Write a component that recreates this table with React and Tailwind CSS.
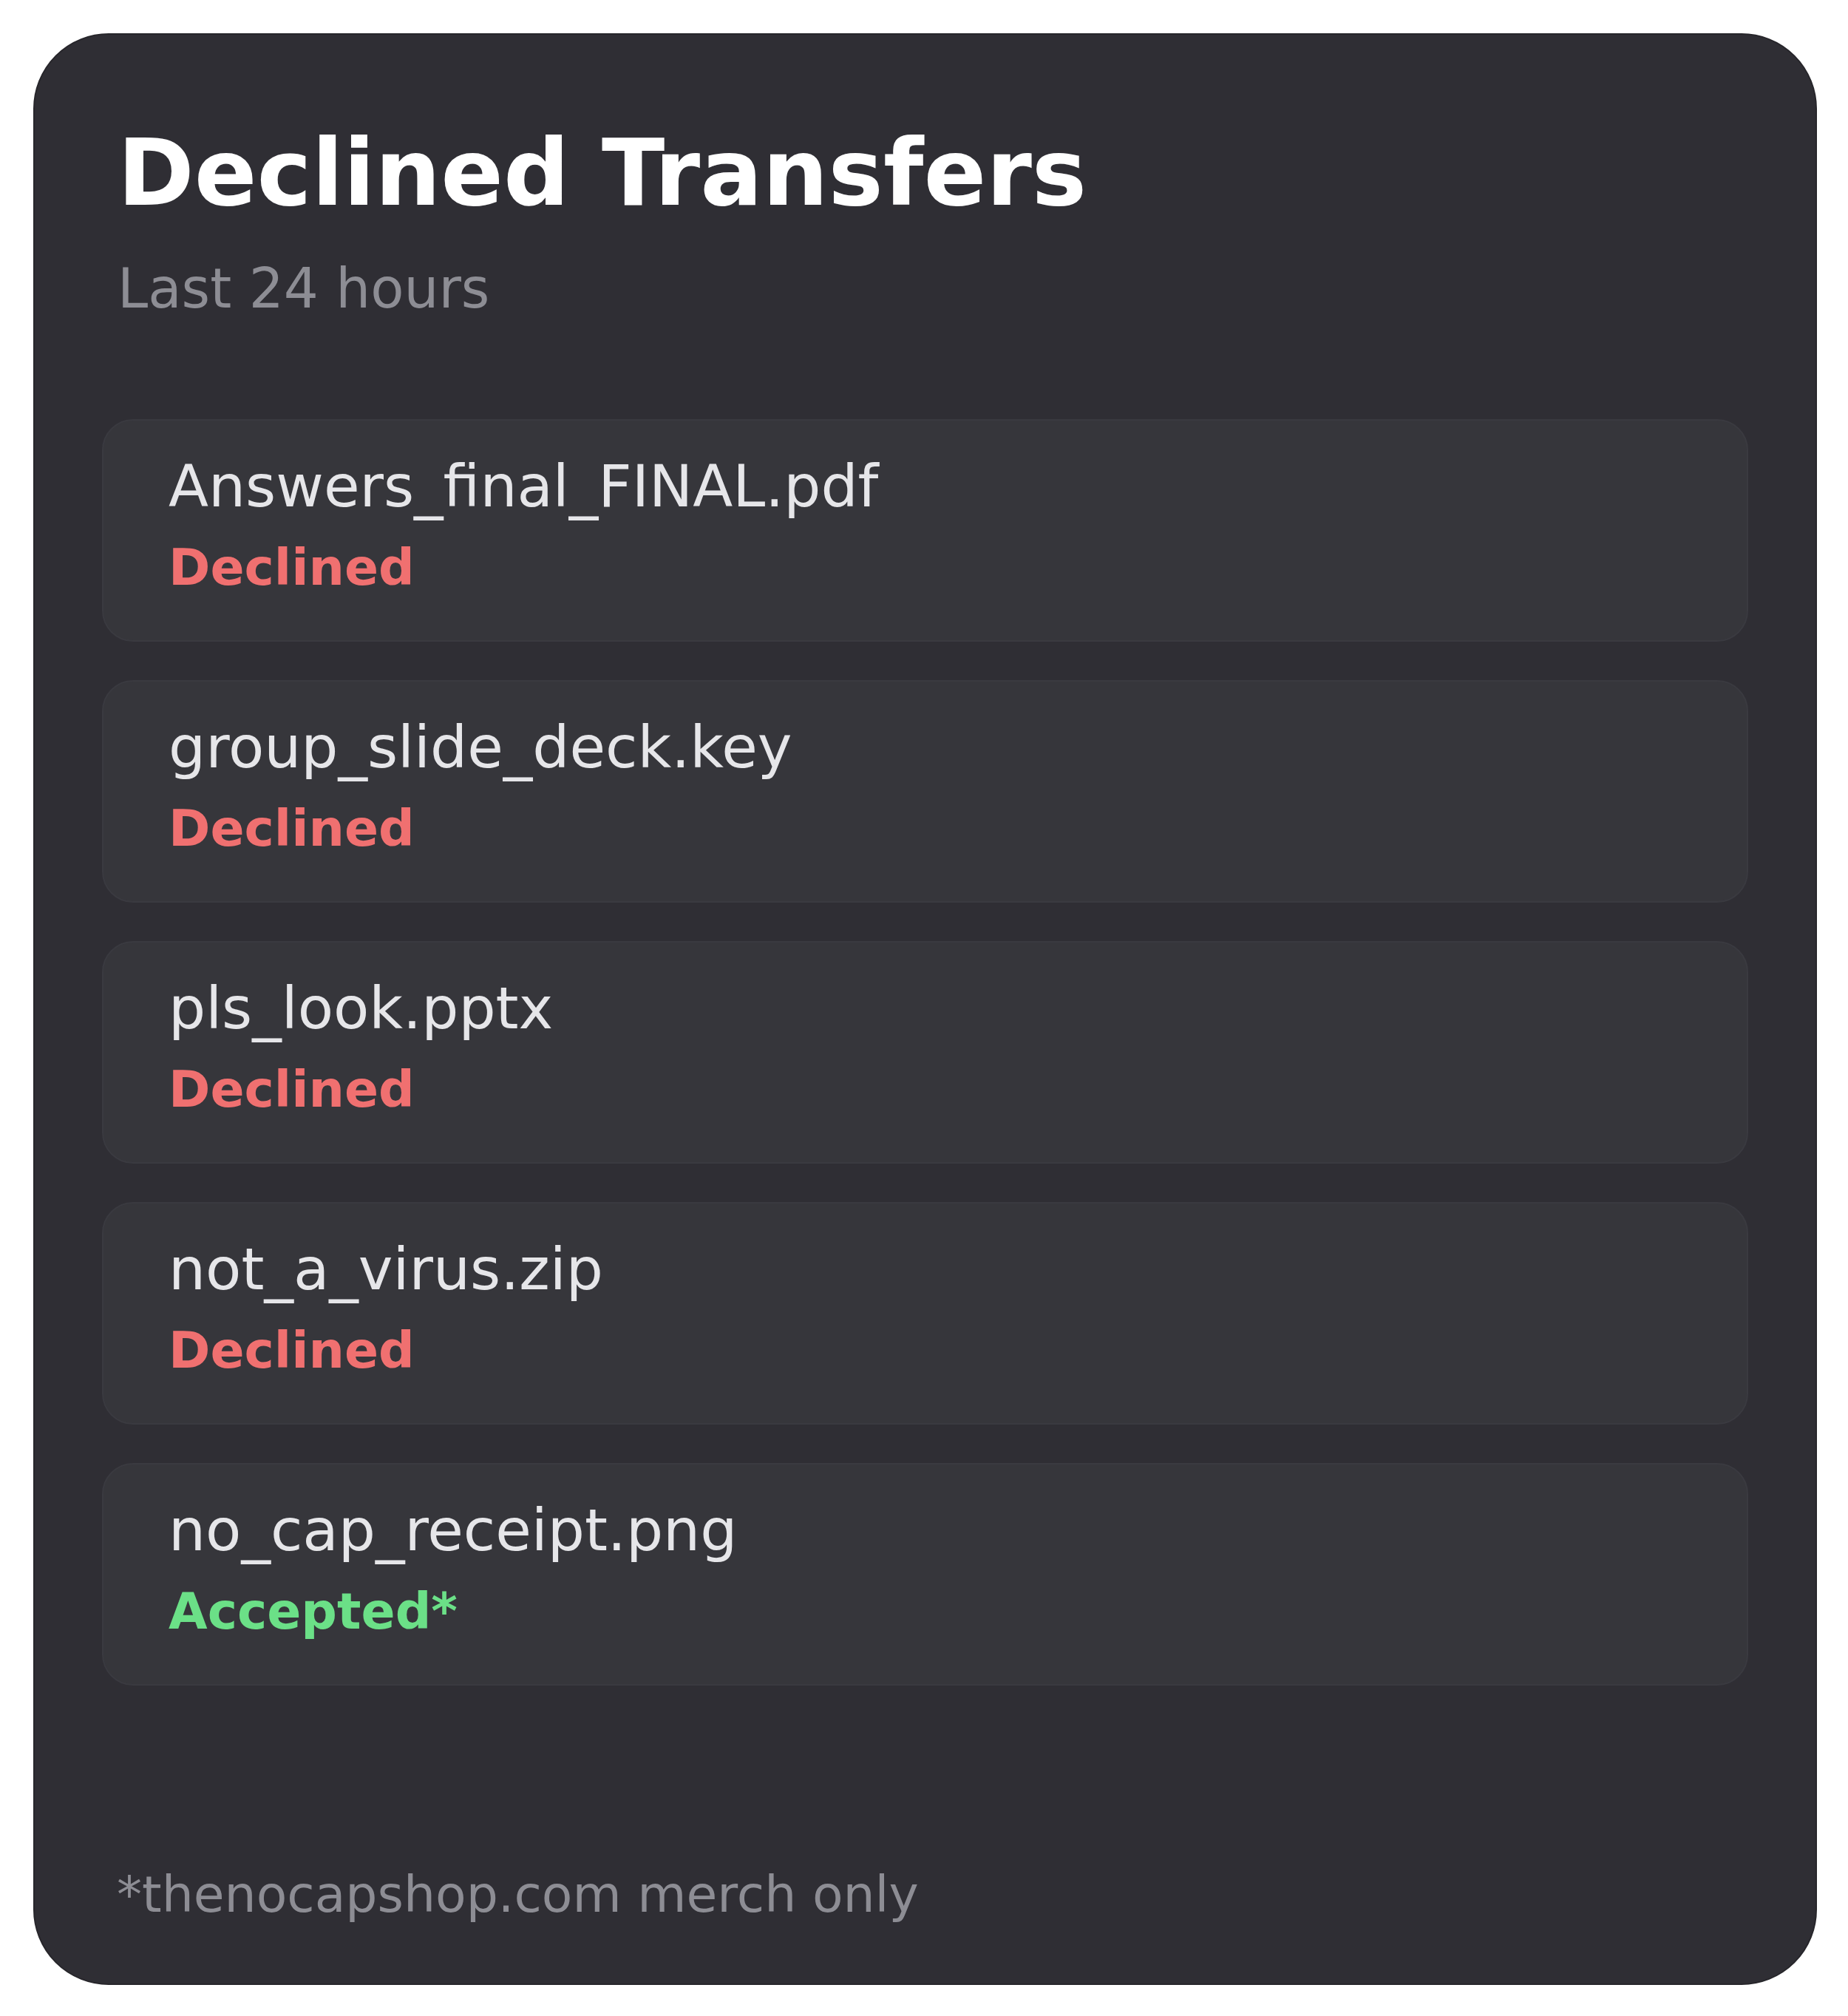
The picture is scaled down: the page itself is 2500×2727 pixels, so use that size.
const transfers = [
  { name: 'Answers_final_FINAL.pdf', status: 'Declined' },
  { name: 'group_slide_deck.key', status: 'Declined' },
  { name: 'pls_look.pptx', status: 'Declined' },
  { name: 'not_a_virus.zip', status: 'Declined' },
  { name: 'no_cap_receipt.png', status: 'Accepted*' },
]

export default function App() {
  return (
    <div className="w-[2500px] h-[2727px] bg-white pt-[45px] pl-[45px] font-['DejaVu_Sans',sans-serif]">
      <div className="w-[2413px] h-[2640px] flex flex-col rounded-[102px] bg-[#2f2e34] border-2 border-[#27262b] pb-[75px]">
        {/* Header */}
        <div className="pt-[112px] pl-[112px]">
          <h1 className="text-[125px] leading-[150px] font-bold text-white">Declined Transfers</h1>
          <p className="mt-[31px] text-[74px] leading-[100px] text-[#8d8d94]">Last 24 hours</p>
        </div>

        {/* List */}
        <div className="mt-[127px] px-[91px] flex flex-col gap-[52px]">
          {transfers.map((t) => (
            <div
              key={t.name}
              className="h-[301px] rounded-[42px] bg-[#36363b] border-2 border-[#3a3a40] pl-[88px] pt-[39px]"
            >
              <div className="text-[79px] leading-[100px] text-[#e6e6e9]">{t.name}</div>
              <div
                className={`mt-[15px] text-[68px] leading-[90px] font-bold ${
                  t.status === 'Declined' ? 'text-[#f07070]' : 'text-[#6be087]'
                }`}
              >
                {t.status}
              </div>
            </div>
          ))}
        </div>

        {/* Footer */}
        <div className="mt-auto pl-[111px] text-[68px] leading-[90px] text-[#8d8d94]">
          *thenocapshop.com merch only
        </div>
      </div>
    </div>
  )
}
